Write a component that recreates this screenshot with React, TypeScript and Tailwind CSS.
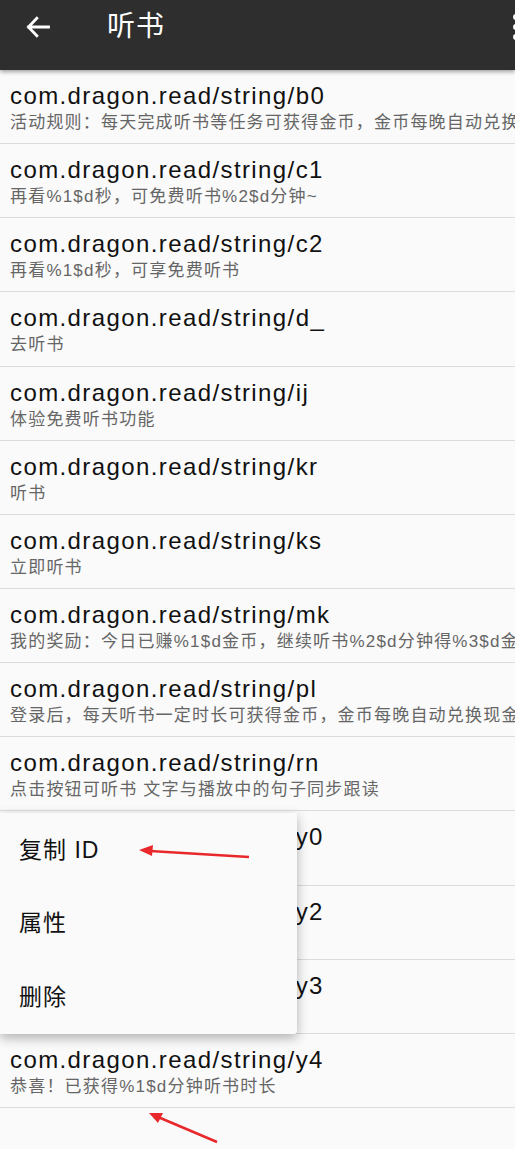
const rows = [
  { id: "b0", text: "活动规则：每天完成听书等任务可获得金币，金币每晚自动兑换现金" },
  { id: "c1", text: "再看%1$d秒，可免费听书%2$d分钟~" },
  { id: "c2", text: "再看%1$d秒，可享免费听书" },
  { id: "d_", text: "去听书" },
  { id: "ij", text: "体验免费听书功能" },
  { id: "kr", text: "听书" },
  { id: "ks", text: "立即听书" },
  { id: "mk", text: "我的奖励：今日已赚%1$d金币，继续听书%2$d分钟得%3$d金币" },
  { id: "pl", text: "登录后，每天听书一定时长可获得金币，金币每晚自动兑换现金" },
  { id: "rn", text: "点击按钮可听书 文字与播放中的句子同步跟读" },
  { id: "y0", text: "" },
  { id: "y2", text: "" },
  { id: "y3", text: "" },
  { id: "y4", text: "恭喜！已获得%1$d分钟听书时长" },
];

const font = { fontFamily: '"Liberation Sans", "Noto Sans CJK SC", sans-serif' };

export default function App() {
  return (
    <div className="relative h-[1149px] w-[515px] overflow-hidden bg-[#fafafa]" style={font}>
      <header className="relative z-10 flex h-[70px] items-start bg-[#2e2e2e] pt-[13px] shadow-[0_2px_4px_rgba(0,0,0,0.35)]">
        <svg className="ml-[24px] h-[28px] w-[28px]" viewBox="0 0 24 24" fill="none" stroke="white" strokeWidth="2.4" strokeLinecap="square">
          <path d="M21 12H4M11 4.5L3.8 12l7.2 7.5" />
        </svg>
        <h1 className="ml-[55px] text-[28px] leading-[28px] tracking-[1px] text-white">听书</h1>
        <div className="ml-auto mr-[-4px] mt-[1px] flex flex-col gap-[4px]">
          <span className="h-[6px] w-[6px] rounded-full bg-white" />
          <span className="h-[6px] w-[6px] rounded-full bg-white" />
          <span className="h-[6px] w-[6px] rounded-full bg-white" />
        </div>
      </header>

      <ul>
        {rows.map((r) => (
          <li key={r.id} className="h-[74.15px] overflow-hidden border-b border-[#dcdcdc] pl-[10px] pt-[10px]">
            <div className="whitespace-nowrap text-[24px] leading-[32px] tracking-[1.4px] text-[#111]">com.dragon.read/string/{r.id}</div>
            <div className="whitespace-nowrap text-[17px] leading-[22px] tracking-[1.2px] text-[#666]">{r.text}</div>
          </li>
        ))}
      </ul>

      <div className="absolute left-0 top-[813px] z-20 flex h-[221px] w-[297px] flex-col rounded-br-[3px] bg-[#fafafa] shadow-[0_4px_12px_rgba(0,0,0,0.3)]">
        {["复制 ID", "属性", "删除"].map((t) => (
          <div key={t} className="flex h-[74px] items-center pl-[19px] text-[23px] tracking-[1px] text-[#111]">
            {t}
          </div>
        ))}
      </div>

      <svg className="pointer-events-none absolute left-0 top-0 z-30" width="515" height="1149">
        <line x1="249" y1="857" x2="150" y2="851" stroke="#e8282b" strokeWidth="2.5" />
        <polygon points="139,850 153,845 152,856" fill="#e8282b" />
        <line x1="217" y1="1142" x2="158" y2="1117" stroke="#e8282b" strokeWidth="2.5" />
        <polygon points="149,1113 163,1113 158,1123" fill="#e8282b" />
      </svg>
    </div>
  );
}
